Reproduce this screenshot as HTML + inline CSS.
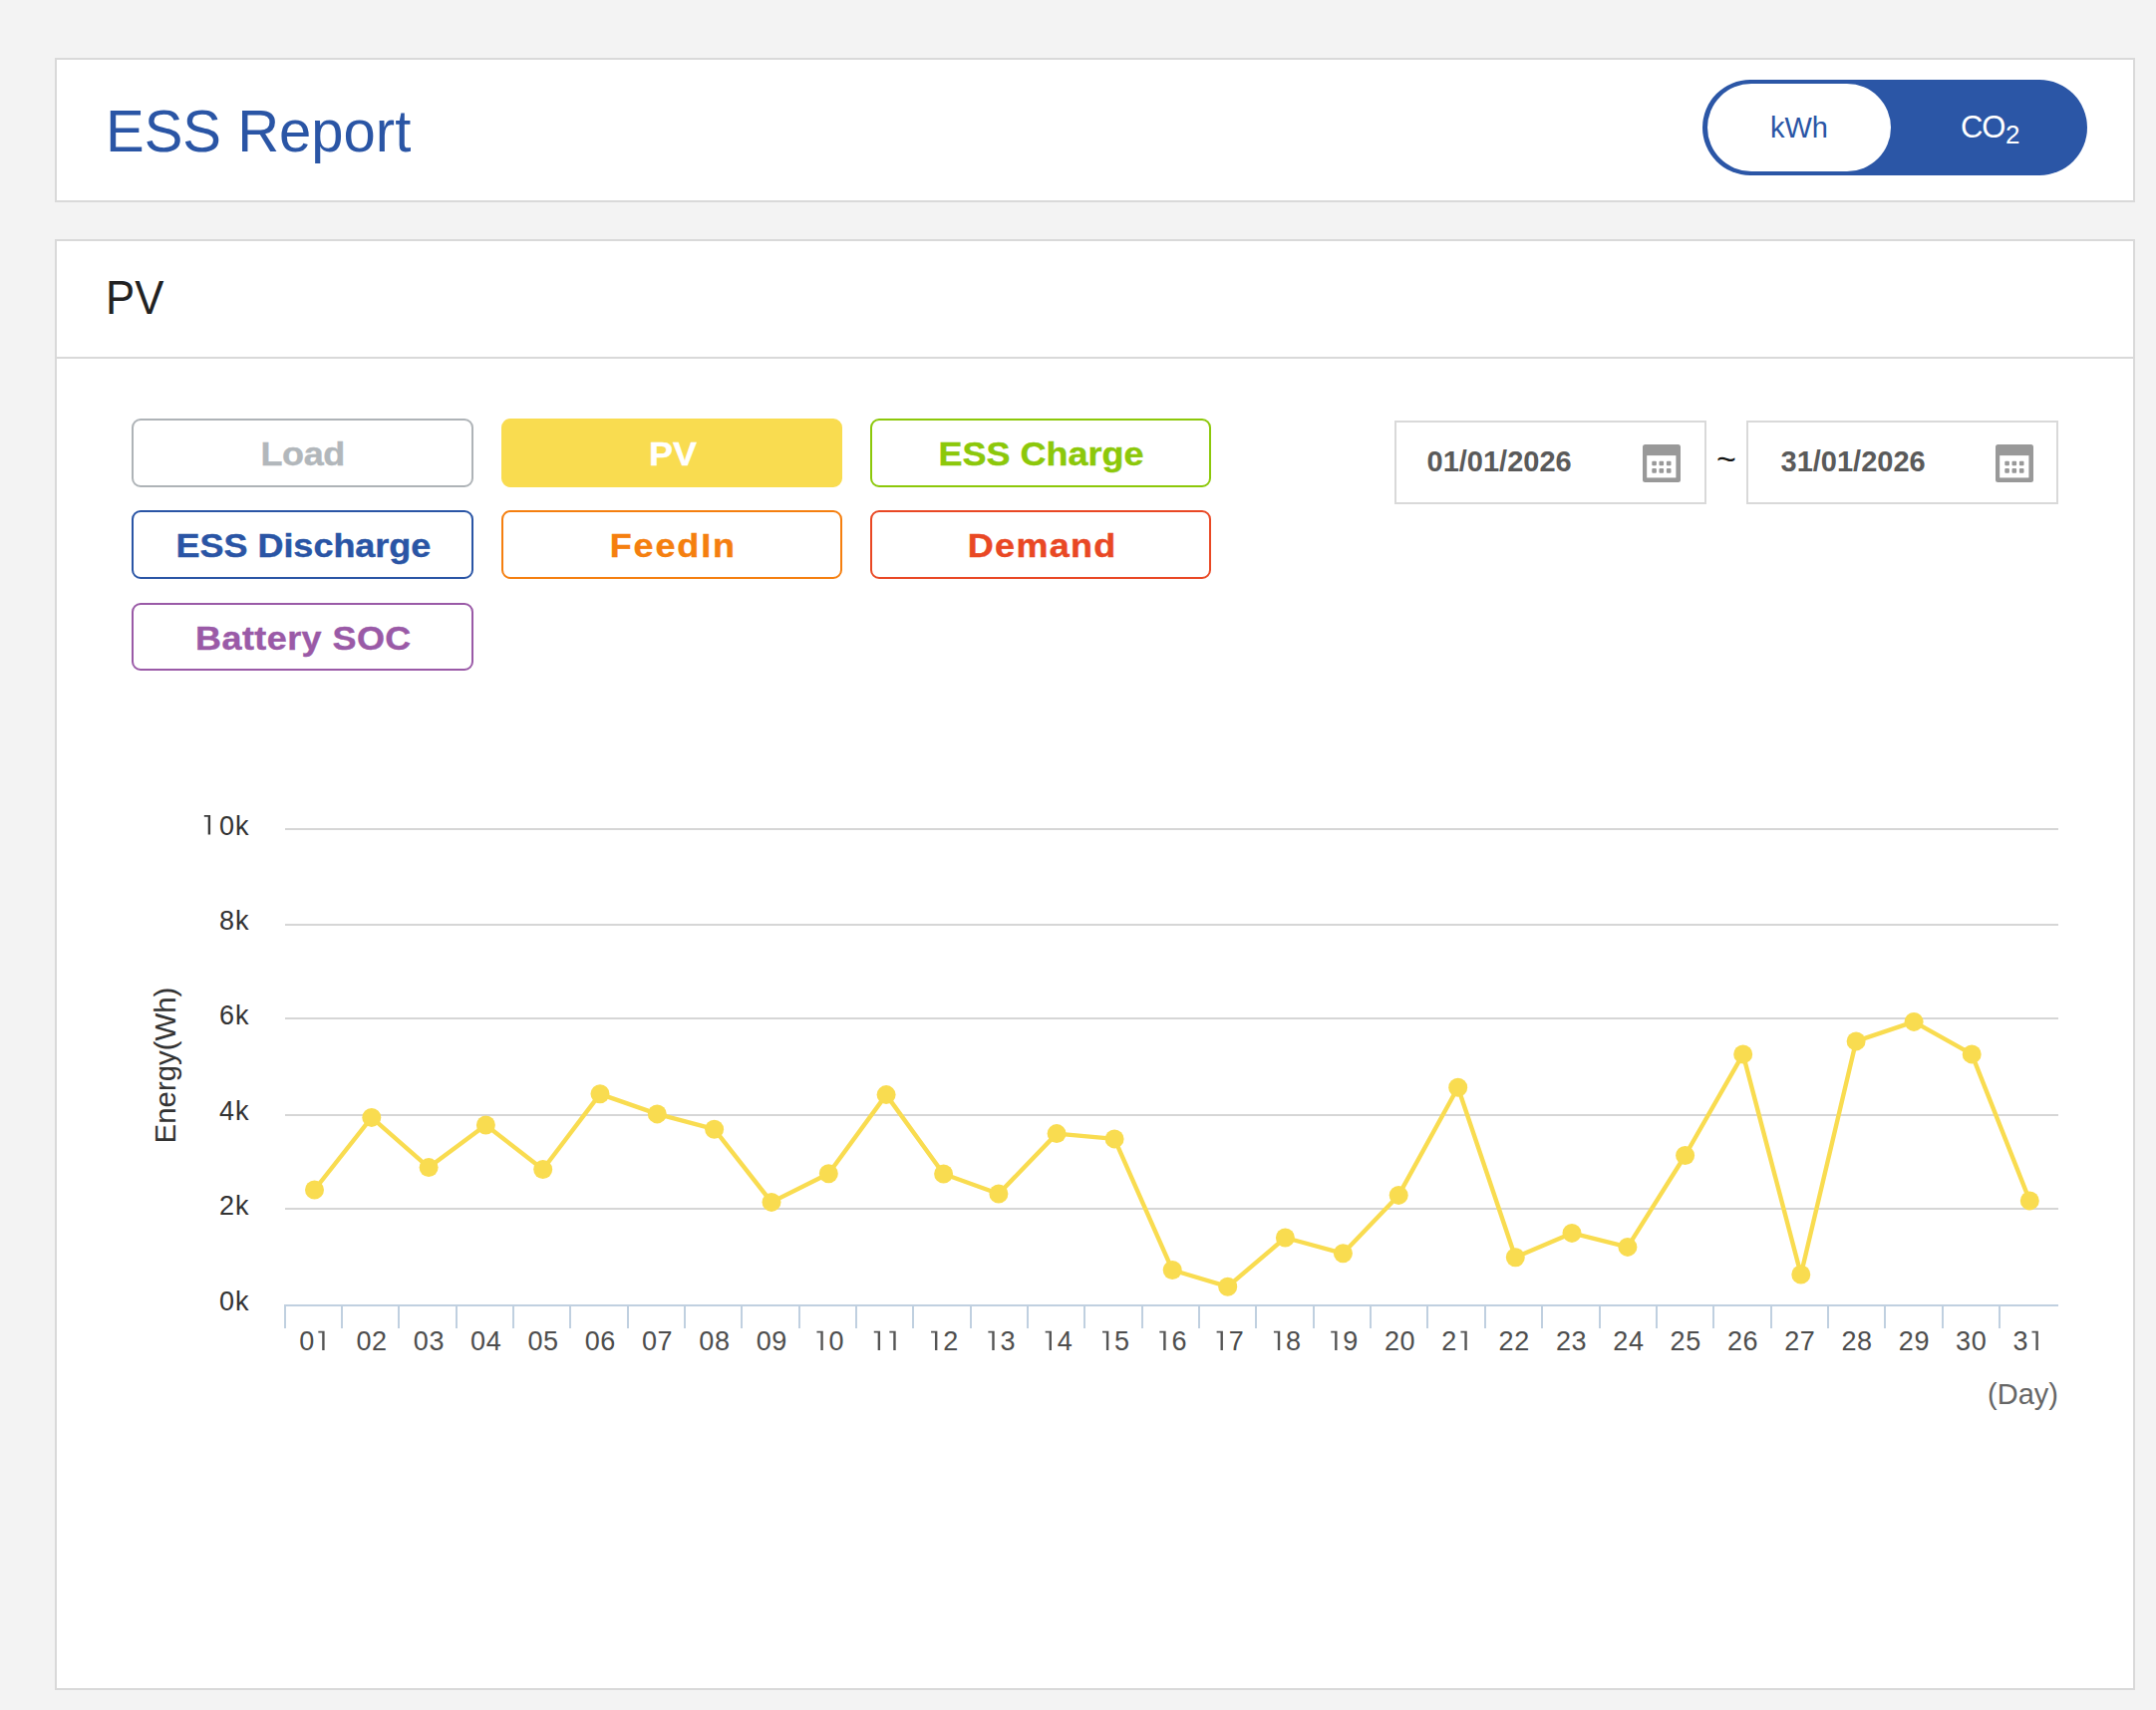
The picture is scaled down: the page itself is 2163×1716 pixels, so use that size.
<!DOCTYPE html>
<html><head><meta charset="utf-8">
<style>
html,body{margin:0;padding:0;}
body{width:2163px;height:1716px;background:#f3f3f3;position:relative;overflow:hidden;font-family:"Liberation Sans",sans-serif;}
.card{position:absolute;background:#fff;border:2px solid #d9d9d9;box-sizing:border-box;}
#c1{left:55px;top:58px;width:2087px;height:145px;}
#c2{left:55px;top:240px;width:2087px;height:1456px;}
#div{position:absolute;left:57px;top:358px;width:2083px;height:2px;background:#d9d9d9;}
.abs{position:absolute;white-space:nowrap;}
#title{left:106px;top:97px;font-size:59px;color:#2a55a5;line-height:70px;transform-origin:0 0;transform:scaleX(0.983);}
#pvt{left:106px;top:271px;font-size:48px;color:#222;line-height:56px;transform-origin:0 0;transform:scaleX(0.91);}
#toggle{left:1708px;top:79.5px;width:386px;height:96.5px;border-radius:49px;background:#2b56a6;}
#kwh{position:absolute;left:5px;top:4.9px;width:184px;height:87.3px;border-radius:44px;background:#fff;}
#kwh span{position:absolute;left:0;width:184px;text-align:center;top:24px;font-size:29px;line-height:40px;color:#2a55a5;}
#co2{position:absolute;left:259px;top:28.5px;font-size:31px;line-height:40px;color:#fff;letter-spacing:-1.2px;}
#co2 sub{font-size:26px;position:relative;top:0px;vertical-align:-6px;line-height:0;letter-spacing:0;margin-left:1px;}
.btn{position:absolute;width:342.5px;height:68.6px;box-sizing:border-box;border:2px solid;border-radius:9px;text-align:center;font-weight:bold;font-size:33px;line-height:64.6px;background:#fff;}
.btn span{position:relative;display:inline-block;top:2px;left:1px;transform:scaleX(1.09);-webkit-text-stroke:0.4px currentColor;}
.date{position:absolute;top:422px;width:313px;height:84px;box-sizing:border-box;border:2px solid #d9d9d9;background:#fff;}
.date span{position:absolute;left:30.5px;top:19px;font-size:29px;font-weight:bold;color:#5a5a5a;line-height:40px;}
.cal{position:absolute;top:22px;width:38px;height:38px;}
#tilde{left:1722px;top:440px;font-size:34px;color:#111;line-height:40px;}
#chart{position:absolute;left:0;top:0;}
.yl text{font-size:27px;fill:#333;font-family:"Liberation Sans",sans-serif;letter-spacing:1px;}
.xl text{font-size:27px;fill:#4d4d4d;font-family:"Liberation Sans",sans-serif;}
.ytitle{font-size:29.4px;fill:#333;font-family:"Liberation Sans",sans-serif;}
.daylab{font-size:29px;fill:#666;font-family:"Liberation Sans",sans-serif;}
</style></head><body>
<div class="card" id="c1"></div>
<div class="card" id="c2"></div>
<div id="div"></div>
<div class="abs" id="title">ESS Report</div>
<div class="abs" id="toggle"><div id="kwh"><span>kWh</span></div><div id="co2">CO<sub>2</sub></div></div>
<div class="abs" id="pvt">PV</div>

<div class="btn" style="left:132px;top:420px;border-color:#aeb3b7;color:#b2b7bb;letter-spacing:-0.35px;"><span style="margin-right:0.35px">Load</span></div>
<div class="btn" style="left:502.5px;top:420px;border-color:#f9dc50;background:#f9dc50;color:#fff;letter-spacing:0px;"><span style="margin-right:0px">PV</span></div>
<div class="btn" style="left:872.5px;top:420px;border-color:#8cc80a;color:#8cc80a;letter-spacing:0px;"><span style="margin-right:0px">ESS Charge</span></div>
<div class="btn" style="left:132px;top:512.2px;border-color:#2a55a5;color:#2a55a5;letter-spacing:0px;"><span style="margin-right:0px">ESS Discharge</span></div>
<div class="btn" style="left:502.5px;top:512.2px;border-color:#f57f0f;color:#f57f0f;letter-spacing:1.72px;"><span style="margin-right:-1.72px">FeedIn</span></div>
<div class="btn" style="left:872.5px;top:512.2px;border-color:#e94824;color:#e94824;letter-spacing:1.2px;"><span style="margin-right:-1.2px">Demand</span></div>
<div class="btn" style="left:132px;top:604.9px;border-color:#9a5aa7;color:#9a5aa7;letter-spacing:0.4px;"><span style="margin-right:-0.4px">Battery SOC</span></div>

<div class="date" style="left:1399px;"><span>01/01/2026</span>
<svg class="cal" style="left:247px" viewBox="0 0 38 38"><rect x="0" y="0" width="38" height="38" rx="2.5" fill="#999"/><rect x="4.2" y="11.1" width="29.2" height="22.3" fill="#fff"/><g fill="#999"><rect x="9.3" y="16.7" width="4.6" height="4.6" rx="1"/><rect x="16.5" y="16.7" width="4.6" height="4.6" rx="1"/><rect x="23.9" y="16.7" width="4.6" height="4.6" rx="1"/><rect x="9.3" y="24.1" width="4.6" height="4.6" rx="1"/><rect x="16.5" y="24.1" width="4.6" height="4.6" rx="1"/><rect x="23.9" y="24.1" width="4.6" height="4.6" rx="1"/></g></svg></div>
<div class="abs" id="tilde">~</div>
<div class="date" style="left:1752px;"><span style="left:32.5px">31/01/2026</span>
<svg class="cal" style="left:248px" viewBox="0 0 38 38"><rect x="0" y="0" width="38" height="38" rx="2.5" fill="#999"/><rect x="4.2" y="11.1" width="29.2" height="22.3" fill="#fff"/><g fill="#999"><rect x="9.3" y="16.7" width="4.6" height="4.6" rx="1"/><rect x="16.5" y="16.7" width="4.6" height="4.6" rx="1"/><rect x="23.9" y="16.7" width="4.6" height="4.6" rx="1"/><rect x="9.3" y="24.1" width="4.6" height="4.6" rx="1"/><rect x="16.5" y="24.1" width="4.6" height="4.6" rx="1"/><rect x="23.9" y="24.1" width="4.6" height="4.6" rx="1"/></g></svg></div>

<svg id="chart" width="2163" height="1716" viewBox="0 0 2163 1716">
<rect x="286" y="831" width="1779" height="2" fill="#d6d6d6"/><rect x="286" y="927" width="1779" height="2" fill="#d6d6d6"/><rect x="286" y="1021" width="1779" height="2" fill="#d6d6d6"/><rect x="286" y="1118" width="1779" height="2" fill="#d6d6d6"/><rect x="286" y="1212" width="1779" height="2" fill="#d6d6d6"/><rect x="285" y="1309" width="1780" height="2" fill="#c0d0e0"/><rect x="285" y="1309" width="2" height="24" fill="#c0d0e0"/><rect x="342" y="1309" width="2" height="24" fill="#c0d0e0"/><rect x="399" y="1309" width="2" height="24" fill="#c0d0e0"/><rect x="457" y="1309" width="2" height="24" fill="#c0d0e0"/><rect x="514" y="1309" width="2" height="24" fill="#c0d0e0"/><rect x="571" y="1309" width="2" height="24" fill="#c0d0e0"/><rect x="629" y="1309" width="2" height="24" fill="#c0d0e0"/><rect x="686" y="1309" width="2" height="24" fill="#c0d0e0"/><rect x="743" y="1309" width="2" height="24" fill="#c0d0e0"/><rect x="801" y="1309" width="2" height="24" fill="#c0d0e0"/><rect x="858" y="1309" width="2" height="24" fill="#c0d0e0"/><rect x="915" y="1309" width="2" height="24" fill="#c0d0e0"/><rect x="973" y="1309" width="2" height="24" fill="#c0d0e0"/><rect x="1030" y="1309" width="2" height="24" fill="#c0d0e0"/><rect x="1087" y="1309" width="2" height="24" fill="#c0d0e0"/><rect x="1145" y="1309" width="2" height="24" fill="#c0d0e0"/><rect x="1202" y="1309" width="2" height="24" fill="#c0d0e0"/><rect x="1259" y="1309" width="2" height="24" fill="#c0d0e0"/><rect x="1317" y="1309" width="2" height="24" fill="#c0d0e0"/><rect x="1374" y="1309" width="2" height="24" fill="#c0d0e0"/><rect x="1431" y="1309" width="2" height="24" fill="#c0d0e0"/><rect x="1489" y="1309" width="2" height="24" fill="#c0d0e0"/><rect x="1546" y="1309" width="2" height="24" fill="#c0d0e0"/><rect x="1604" y="1309" width="2" height="24" fill="#c0d0e0"/><rect x="1661" y="1309" width="2" height="24" fill="#c0d0e0"/><rect x="1718" y="1309" width="2" height="24" fill="#c0d0e0"/><rect x="1776" y="1309" width="2" height="24" fill="#c0d0e0"/><rect x="1833" y="1309" width="2" height="24" fill="#c0d0e0"/><rect x="1890" y="1309" width="2" height="24" fill="#c0d0e0"/><rect x="1948" y="1309" width="2" height="24" fill="#c0d0e0"/><rect x="2005" y="1309" width="2" height="24" fill="#c0d0e0"/>
<g class="yl"><text x="250.5" y="838" text-anchor="end">0k</text><path d="M208.70 819.70H204.80V818.10H211.10V837.60H208.70Z" fill="#3a3a3a"/><text x="250.5" y="932.5" text-anchor="end">8k</text><text x="250.5" y="1028" text-anchor="end">6k</text><text x="250.5" y="1123.5" text-anchor="end">4k</text><text x="250.5" y="1219" text-anchor="end">2k</text><text x="250.5" y="1314.5" text-anchor="end">0k</text></g>
<g class="xl"><text x="307.7" y="1355" text-anchor="middle">0</text><path d="M323.20 1337.40H319.30V1335.80H325.60V1355.00H323.20Z" fill="#555"/><text x="365.0" y="1355" text-anchor="middle">0</text><text x="380.6" y="1355" text-anchor="middle">2</text><text x="422.3" y="1355" text-anchor="middle">0</text><text x="437.9" y="1355" text-anchor="middle">3</text><text x="479.6" y="1355" text-anchor="middle">0</text><text x="495.2" y="1355" text-anchor="middle">4</text><text x="536.9" y="1355" text-anchor="middle">0</text><text x="552.5" y="1355" text-anchor="middle">5</text><text x="594.2" y="1355" text-anchor="middle">0</text><text x="609.8" y="1355" text-anchor="middle">6</text><text x="651.5" y="1355" text-anchor="middle">0</text><text x="667.1" y="1355" text-anchor="middle">7</text><text x="708.8" y="1355" text-anchor="middle">0</text><text x="724.4" y="1355" text-anchor="middle">8</text><text x="766.2" y="1355" text-anchor="middle">0</text><text x="781.8" y="1355" text-anchor="middle">9</text><path d="M823.36 1337.40H819.46V1335.80H825.76V1355.00H823.36Z" fill="#555"/><text x="839.1" y="1355" text-anchor="middle">0</text><path d="M880.67 1337.40H876.77V1335.80H883.07V1355.00H880.67Z" fill="#555"/><path d="M896.27 1337.40H892.37V1335.80H898.67V1355.00H896.27Z" fill="#555"/><path d="M937.98 1337.40H934.08V1335.80H940.38V1355.00H937.98Z" fill="#555"/><text x="953.7" y="1355" text-anchor="middle">2</text><path d="M995.28 1337.40H991.38V1335.80H997.68V1355.00H995.28Z" fill="#555"/><text x="1011.0" y="1355" text-anchor="middle">3</text><path d="M1052.59 1337.40H1048.69V1335.80H1054.99V1355.00H1052.59Z" fill="#555"/><text x="1068.3" y="1355" text-anchor="middle">4</text><path d="M1109.90 1337.40H1106.00V1335.80H1112.30V1355.00H1109.90Z" fill="#555"/><text x="1125.6" y="1355" text-anchor="middle">5</text><path d="M1167.20 1337.40H1163.31V1335.80H1169.61V1355.00H1167.20Z" fill="#555"/><text x="1182.9" y="1355" text-anchor="middle">6</text><path d="M1224.51 1337.40H1220.61V1335.80H1226.91V1355.00H1224.51Z" fill="#555"/><text x="1240.2" y="1355" text-anchor="middle">7</text><path d="M1281.82 1337.40H1277.92V1335.80H1284.22V1355.00H1281.82Z" fill="#555"/><text x="1297.5" y="1355" text-anchor="middle">8</text><path d="M1339.13 1337.40H1335.23V1335.80H1341.53V1355.00H1339.13Z" fill="#555"/><text x="1354.8" y="1355" text-anchor="middle">9</text><text x="1396.5" y="1355" text-anchor="middle">2</text><text x="1412.1" y="1355" text-anchor="middle">0</text><text x="1453.8" y="1355" text-anchor="middle">2</text><path d="M1469.34 1337.40H1465.44V1335.80H1471.74V1355.00H1469.34Z" fill="#555"/><text x="1511.1" y="1355" text-anchor="middle">2</text><text x="1526.7" y="1355" text-anchor="middle">2</text><text x="1568.5" y="1355" text-anchor="middle">2</text><text x="1584.1" y="1355" text-anchor="middle">3</text><text x="1625.8" y="1355" text-anchor="middle">2</text><text x="1641.4" y="1355" text-anchor="middle">4</text><text x="1683.1" y="1355" text-anchor="middle">2</text><text x="1698.7" y="1355" text-anchor="middle">5</text><text x="1740.4" y="1355" text-anchor="middle">2</text><text x="1756.0" y="1355" text-anchor="middle">6</text><text x="1797.7" y="1355" text-anchor="middle">2</text><text x="1813.3" y="1355" text-anchor="middle">7</text><text x="1855.0" y="1355" text-anchor="middle">2</text><text x="1870.6" y="1355" text-anchor="middle">8</text><text x="1912.3" y="1355" text-anchor="middle">2</text><text x="1927.9" y="1355" text-anchor="middle">9</text><text x="1969.6" y="1355" text-anchor="middle">3</text><text x="1985.2" y="1355" text-anchor="middle">0</text><text x="2026.9" y="1355" text-anchor="middle">3</text><path d="M2042.41 1337.40H2038.51V1335.80H2044.81V1355.00H2042.41Z" fill="#555"/></g>
<text class="ytitle" transform="translate(176,1069) rotate(-90)" text-anchor="middle">Energy(Wh)</text>
<text class="daylab" x="2065" y="1409" text-anchor="end">(Day)</text>
<polyline points="315.5,1194.0 372.8,1121.4 430.1,1171.6 487.4,1129.0 544.7,1173.5 602.0,1097.8 659.3,1117.9 716.6,1133.2 774.0,1206.4 831.3,1177.7 889.1,1098.6 946.6,1178.0 1001.9,1198.0 1060.1,1137.6 1118.1,1142.9 1176.2,1274.5 1231.7,1291.2 1289.4,1242.0 1347.4,1257.8 1403.2,1199.4 1462.7,1091.3 1520.3,1261.8 1577.0,1237.4 1632.9,1251.4 1690.6,1159.5 1748.7,1057.9 1806.8,1279.0 1862.1,1044.9 1920.1,1025.4 1978.2,1057.9 2036.3,1204.9" fill="none" stroke="#f9dc50" stroke-width="4.4" stroke-linejoin="round"/>
<g fill="#f9dc50"><circle cx="315.5" cy="1194.0" r="9.5"/><circle cx="372.8" cy="1121.4" r="9.5"/><circle cx="430.1" cy="1171.6" r="9.5"/><circle cx="487.4" cy="1129.0" r="9.5"/><circle cx="544.7" cy="1173.5" r="9.5"/><circle cx="602.0" cy="1097.8" r="9.5"/><circle cx="659.3" cy="1117.9" r="9.5"/><circle cx="716.6" cy="1133.2" r="9.5"/><circle cx="774.0" cy="1206.4" r="9.5"/><circle cx="831.3" cy="1177.7" r="9.5"/><circle cx="889.1" cy="1098.6" r="9.5"/><circle cx="946.6" cy="1178.0" r="9.5"/><circle cx="1001.9" cy="1198.0" r="9.5"/><circle cx="1060.1" cy="1137.6" r="9.5"/><circle cx="1118.1" cy="1142.9" r="9.5"/><circle cx="1176.2" cy="1274.5" r="9.5"/><circle cx="1231.7" cy="1291.2" r="9.5"/><circle cx="1289.4" cy="1242.0" r="9.5"/><circle cx="1347.4" cy="1257.8" r="9.5"/><circle cx="1403.2" cy="1199.4" r="9.5"/><circle cx="1462.7" cy="1091.3" r="9.5"/><circle cx="1520.3" cy="1261.8" r="9.5"/><circle cx="1577.0" cy="1237.4" r="9.5"/><circle cx="1632.9" cy="1251.4" r="9.5"/><circle cx="1690.6" cy="1159.5" r="9.5"/><circle cx="1748.7" cy="1057.9" r="9.5"/><circle cx="1806.8" cy="1279.0" r="9.5"/><circle cx="1862.1" cy="1044.9" r="9.5"/><circle cx="1920.1" cy="1025.4" r="9.5"/><circle cx="1978.2" cy="1057.9" r="9.5"/><circle cx="2036.3" cy="1204.9" r="9.5"/></g>
</svg>
</body></html>
